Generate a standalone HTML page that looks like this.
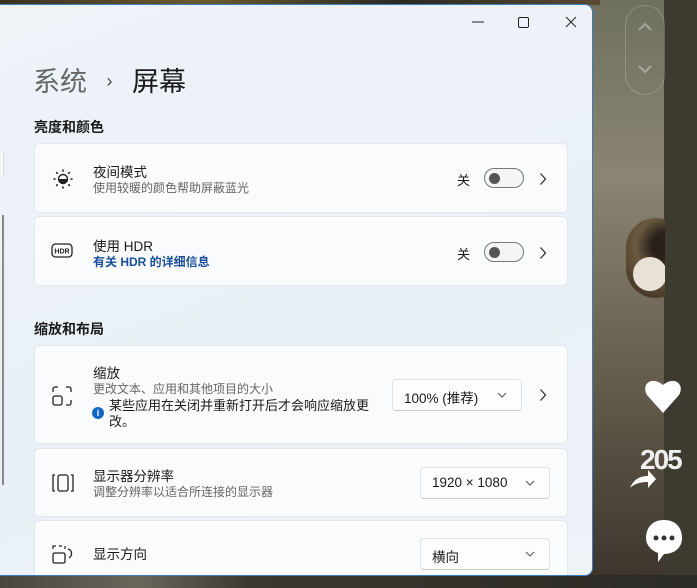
<!DOCTYPE html>
<html><head><meta charset="utf-8"><style>
*{margin:0;padding:0;box-sizing:border-box}
body{width:697px;height:588px;overflow:hidden;position:relative;font-family:"Liberation Sans","Noto Sans CJK SC",sans-serif;background:linear-gradient(180deg,#6f705e 0%,#8a8472 30%,#6a6250 60%,#3a342c 100%)}
.strip{position:absolute;right:0;top:0;width:33px;height:588px;background:#3d3a30}
.topimg{position:absolute;left:0;top:0;width:600px;height:5px;background:linear-gradient(90deg,#3a3020,#6a5a30,#2a2a20,#5a4a30)}
.botimg{position:absolute;left:0;top:575px;width:697px;height:13px;background:linear-gradient(90deg,#4a463e,#6a665c 20%,#3a3830 36%,#2c2a24)}
.win{position:absolute;left:-2px;top:4px;width:595px;height:572px;background:linear-gradient(160deg,#eef3f8,#e9f0f7 60%,#eef3f8);border:1px solid #3b7cc0;border-radius:0 8px 8px 0;overflow:hidden}
.crumb{position:absolute;left:34px;top:55px;font-size:27px;color:#1a1a1a}
.crumb .g{color:#666}
.sec{position:absolute;left:35px;font-size:14px;color:#1a1a1a;font-weight:600}
.card{position:absolute;left:35px;width:534px;background:rgba(251,252,253,.9);border:1px solid #e3e6ea;border-radius:5px}
.t{position:absolute;left:58px;font-size:13.5px;color:#1a1a1a}
.s{position:absolute;left:58px;font-size:12px;color:#666}
.off{position:absolute;font-size:13px;color:#1a1a1a}
.tog{position:absolute;width:40px;height:20px;border:1px solid #777;border-radius:10px;background:#f5f5f5}
.tog:after{content:"";position:absolute;left:4px;top:4px;width:11px;height:11px;border-radius:50%;background:#555}
.chev{position:absolute}
.dd{position:absolute;height:32px;background:#fdfdfd;border:1px solid #dfe1e4;border-bottom-color:#c8cacd;border-radius:4px;font-size:13.5px;color:#1a1a1a;padding:7px 11px}
.dd svg{position:absolute;right:14px;top:12px}
</style></head><body>
<div class="topimg"></div><div class="strip"></div><div class="botimg"></div>
<div style="position:absolute;left:625px;top:5px;width:40px;height:90px;border:1.5px solid rgba(255,255,255,.2);border-radius:20px"></div>
<svg style="position:absolute;left:637px;top:22px" width="16" height="60"><path d="M2 8 L8 2 L14 8 M2 44 L8 50 L14 44" stroke="rgba(255,255,255,.35)" stroke-width="2" fill="none"/></svg>
<div style="position:absolute;left:626px;top:218px;width:39px;height:80px;overflow:hidden"><div style="width:60px;height:80px;border-radius:40px;background:radial-gradient(circle at 40% 70%,#e8e2d6 0 25%,transparent 26%),radial-gradient(circle at 65% 35%,#2a201a 0 20%,#6a5a40 45%,#4a3a28 80%)"></div></div>
<svg style="position:absolute;left:643px;top:375px" width="40" height="40"><path d="M20 38 L4 20 C-2 10 8 0 20 10 C32 0 42 10 36 20 Z" fill="#fff"/></svg>
<div style="position:absolute;left:640px;top:444px;font-size:28px;font-weight:bold;color:#eee;letter-spacing:-2px">205</div>
<svg style="position:absolute;left:628px;top:468px" width="30" height="22"><path d="M2 20 C6 10 14 8 20 8 L20 2 L28 11 L20 20 L20 14 C12 14 6 16 2 20Z" fill="#fff"/></svg>
<svg style="position:absolute;left:644px;top:518px" width="40" height="46"><path d="M20 2 C32 2 38 10 38 20 C38 30 30 36 20 36 L14 44 L14 35 C6 32 2 26 2 20 C2 10 8 2 20 2Z" fill="#fff"/><circle cx="12" cy="20" r="2.5" fill="#333"/><circle cx="20" cy="20" r="2.5" fill="#333"/><circle cx="28" cy="20" r="2.5" fill="#333"/></svg>

<div class="win">
<svg style="position:absolute;left:470px;top:10px" width="110" height="16"><path d="M3 7 H15" stroke="#222" stroke-width="1"/><rect x="49.5" y="2.5" width="10" height="10" rx="1.5" stroke="#222" fill="none"/><path d="M97 2 L107 12 M107 2 L97 12" stroke="#222"/></svg>
<div style="position:absolute;left:2px;top:145px;width:3px;height:28px;border:1px solid #ddd;border-left:none;border-radius:0 3px 3px 0;background:#fff"></div>
<div style="position:absolute;left:3px;top:210px;width:2px;height:270px;background:#888"></div>
<div class="crumb"><span class="g">系统</span> <span style="font-size:18px;color:#444;position:relative;top:-4px;margin:0 12px">›</span> 屏幕</div>
<div class="sec" style="top:112px">亮度和颜色</div>
<div class="card" style="top:138px;height:70px">
<svg style="position:absolute;left:17px;top:24px" width="22" height="22"><circle cx="11" cy="11" r="4.5" stroke="#222" stroke-width="1.4" fill="none"/><path d="M11 11 m-4.5 0 a4.5 4.5 0 0 0 9 0Z" fill="#222"/><g stroke="#222" stroke-width="1.6" stroke-linecap="round"><path d="M11 2v1M11 19v1M2 11h1M19 11h1M4.6 4.6l.6.6M16.8 16.8l.6.6M4.6 17.4l.6-.6M16.8 5.2l.6-.6"/></g></svg>
<div class="t" style="top:17px">夜间模式</div><div class="s" style="top:35px">使用较暖的颜色帮助屏蔽蓝光</div>
<div class="off" style="left:422px;top:26px">关</div><div class="tog" style="left:449px;top:24px"></div>
<svg class="chev" style="left:504px;top:28px" width="8" height="14"><path d="M1.5 1.5 L6.5 7 L1.5 12.5" stroke="#333" stroke-width="1.3" fill="none"/></svg>
</div>
<div class="card" style="top:211px;height:70px">
<svg style="position:absolute;left:16px;top:26px" width="24" height="16"><rect x="1" y="1" width="20" height="13" rx="3.5" stroke="#222" stroke-width="1.3" fill="none"/><text x="11" y="10.5" font-size="7" font-weight="bold" text-anchor="middle" font-family="Liberation Sans" fill="#222">HDR</text></svg>
<div class="t" style="top:18px">使用 HDR</div><div class="s" style="top:36px;color:#1a4f9c;font-weight:600">有关 HDR 的详细信息</div>
<div class="off" style="left:422px;top:27px">关</div><div class="tog" style="left:449px;top:25px"></div>
<svg class="chev" style="left:504px;top:29px" width="8" height="14"><path d="M1.5 1.5 L6.5 7 L1.5 12.5" stroke="#333" stroke-width="1.3" fill="none"/></svg>
</div>
<div class="sec" style="top:314px">缩放和布局</div>
<div class="card" style="top:340px;height:99px">
<svg style="position:absolute;left:17px;top:40px" width="20" height="20"><path d="M1 6V3a2 2 0 0 1 2-2h3M14 1h3a2 2 0 0 1 2 2v3M19 14v3a2 2 0 0 1-2 2h-3" stroke="#222" stroke-width="1.3" fill="none"/><rect x="1" y="10" width="9" height="9" rx="2" stroke="#222" stroke-width="1.3" fill="none"/></svg>
<div class="t" style="top:16px">缩放</div><div class="s" style="top:34px">更改文本、应用和其他项目的大小</div>
<div style="position:absolute;left:57px;top:61px;width:12px;height:12px;border-radius:50%;background:#1466c4;color:#fff;font-size:9px;text-align:center;line-height:12px;font-weight:bold">i</div>
<div style="position:absolute;left:74px;top:52px;width:272px;font-size:13px;line-height:16px;color:#1a1a1a">某些应用在关闭并重新打开后才会响应缩放更改。</div>
<div class="dd" style="left:357px;top:33px;width:130px">100% (推荐)<svg width="10" height="6"><path d="M1 1 L5 5 L9 1" stroke="#555" fill="none"/></svg></div>
<svg class="chev" style="left:504px;top:42px" width="8" height="14"><path d="M1.5 1.5 L6.5 7 L1.5 12.5" stroke="#333" stroke-width="1.3" fill="none"/></svg>
</div>
<div class="card" style="top:443px;height:69px">
<svg style="position:absolute;left:17px;top:25px" width="22" height="18"><path d="M3 1H1v16h2M19 1h2v16h-2" stroke="#222" stroke-width="1.3" fill="none"/><rect x="6" y="1" width="10" height="16" rx="2" stroke="#222" stroke-width="1.3" fill="none"/></svg>
<div class="t" style="top:16px">显示器分辨率</div><div class="s" style="top:34px">调整分辨率以适合所连接的显示器</div>
<div class="dd" style="left:385px;top:18px;width:130px">1920 × 1080<svg width="10" height="6"><path d="M1 1 L5 5 L9 1" stroke="#555" fill="none"/></svg></div>
</div>
<div class="card" style="top:515px;height:70px">
<svg style="position:absolute;left:17px;top:24px" width="24" height="20"><path d="M1 4V1h3M7 1h3M13 1v3" stroke="#222" stroke-width="1.2" fill="none"/><rect x="1" y="8" width="12" height="10" rx="1.5" stroke="#222" stroke-width="1.3" fill="none"/><path d="M16 4c4 1 5 6 1 9" stroke="#222" stroke-width="1.3" fill="none"/></svg>
<div class="t" style="top:22px">显示方向</div>
<div class="dd" style="left:385px;top:17px;width:130px">横向<svg width="10" height="6"><path d="M1 1 L5 5 L9 1" stroke="#555" fill="none"/></svg></div>
</div>
</div>
</body></html>
